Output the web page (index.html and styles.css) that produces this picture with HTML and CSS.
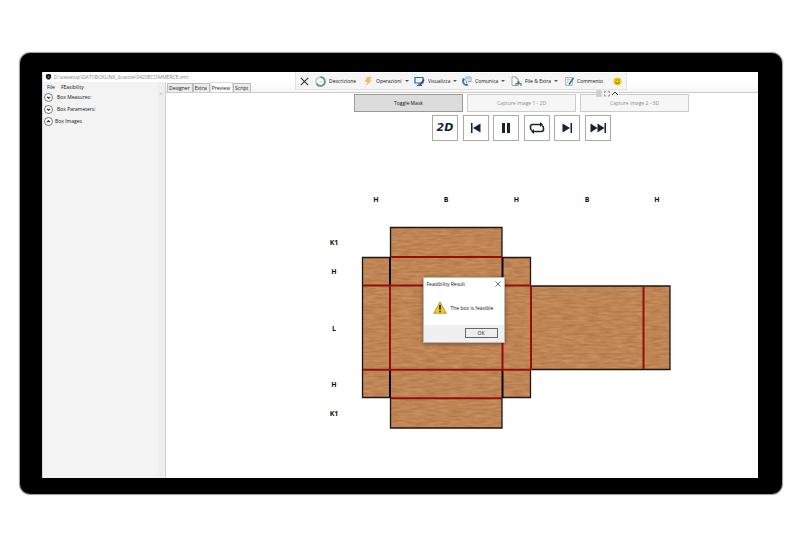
FILE: index.html
```html
<!DOCTYPE html>
<html lang="en">
<head>
<meta charset="utf-8">
<meta name="viewport" content="width=device-width, initial-scale=1">
<title>Box preview</title>
<link rel="stylesheet" href="styles.css">
</head>
<body>
<div class="monitor">
  <div class="screen">
    <header class="titlebar">
      <svg class="app-icon" viewBox="0 0 8 7"><path d="M1 1Q4-1 7 1V4L5 6.500H3L1 4Z" fill="#111"/><path d="M3 3.500h2" stroke="#ddd"/></svg>
      <span>D:\swsetup\DATI\BOXLINK_Scatole\0420ECOMMERCE.xml</span>
    </header>
    <div class="workspace">
      <aside class="sidebar">
        <div class="side-content">
          <nav class="menu"><button>File</button><button>FEasibility</button></nav>
          <button class="expander"><svg viewBox="0 0 9 9"><circle cx="4.500" cy="4.500" r="4"/><path d="M3 3.800l1.500 1.500L6 3.800"/></svg>Box Measures:</button>
          <button class="expander"><svg viewBox="0 0 9 9"><circle cx="4.500" cy="4.500" r="4"/><path d="M3 3.800l1.500 1.500L6 3.800"/></svg>Box Parameters:</button>
          <button class="expander open"><svg viewBox="0 0 9 9"><circle cx="4.500" cy="4.500" r="4"/><path d="M3 5.200l1.500-1.500L6 5.200"/></svg>Box Images</button>
        </div>
        <div class="scrollbar"><svg viewBox="0 0 4 4"><path d="M.5 3L2 1l1.500 2" fill="none" stroke="#aaa" stroke-width=".6"/></svg></div>
      </aside>
      <main class="main">
        <nav class="tabs">
          <button>Designer</button><button>Extra</button><button class="active">Preview</button><button>Script</button>
        </nav>
        <section class="preview">
          <div class="actions">
            <button class="toggle">Toggle Mask</button>
            <button disabled>Capture image 1 - 2D</button>
            <button disabled>Capture image 2 - 3D</button>
          </div>
          <div class="player">
            <button class="two-d">2D</button>
            <button aria-label="First"><svg viewBox="0 0 24 24"><path d="M7 7h1.500v10H7zM16.500 7.500v9l-7.500-4.500z"/></svg></button>
            <button aria-label="Pause"><svg viewBox="0 0 24 24"><path d="M8 7h3v10H8zM13 7h3v10h-3z"/></svg></button>
            <button aria-label="Repeat"><svg viewBox="0 0 24 24"><path d="M15.500 8.500H7.500Q5.500 8.500 5.500 10.500V12Q5.500 14 7 14.200M8.500 15.500h8q2 0 2-2V12Q18.500 10 17 9.800" fill="none" stroke="#142433" stroke-width="1.600"/><path d="M15 6l3 2.500-3 2.500zM9 13l-3 2.500L9 18z"/></svg></button>
            <button aria-label="Last"><svg viewBox="0 0 24 24"><path d="M7.500 7.500v9l7.500-4.500zM15.500 7H17v10h-1.500z"/></svg></button>
            <button aria-label="Fast forward"><svg viewBox="0 0 24 24"><path d="M4.500 7.500v9l7-4.500zM11.500 7.500v9l7-4.500zM18.500 7H20v10h-1.500z"/></svg></button>
          </div>
          <div class="stage">
            <svg class="diagram" viewBox="321 190 402 250">
              <defs>
                <filter id="grain" x="0" y="0" width="100%" height="100%" color-interpolation-filters="sRGB">
                  <feTurbulence type="fractalNoise" baseFrequency=".08 .45" numOctaves="3" seed="4"/>
                  <feColorMatrix values=".14 0 0 0 .68  .15 0 0 0 .445  .15 0 0 0 .255  0 0 0 0 1"/>
                  <feComposite in2="SourceGraphic" operator="in"/>
                </filter>
              </defs>
              <path filter="url(#grain)" fill="#be8454" d="M390.500 227.500H502V257.500H530.500V286H670V369.500H530.500V397.500H502V428H390.500V397.500H362.500V257.500H390.500Z"/>
              <path fill="none" stroke="#1c1712" stroke-width="1.300" d="M390.500 227.500H502V257.500H530.500V286H670V369.500H530.500V397.500H502V428H390.500V397.500H362.500V257.500H390.500Z"/>
              <path stroke="#0c0806" stroke-width="2" d="M390 257.500V286M502.500 257.500V286M390 369.500V398M502.500 369.500V398"/>
              <path stroke="#990c0c" stroke-width="2" d="M391 257H502M363 285.500H531M363 369.800H531M391 398.200H502M390 286V369.500M502.500 286V369.500M531 285.500V370M643.500 286.500V369"/>
              <g class="dims">
                <text x="376" y="202">H</text><text x="446" y="202">B</text><text x="516.500" y="202">H</text><text x="587" y="202">B</text><text x="657" y="202">H</text>
                <text x="334" y="245">K1</text><text x="334" y="274">H</text><text x="334" y="331">L</text><text x="334" y="387">H</text><text x="334" y="416">K1</text>
              </g>
            </svg>
            <div class="dialog" role="dialog" aria-labelledby="dialog-title">
              <div class="dialog-head"><span id="dialog-title">Feasibility Result</span><button aria-label="Close"><svg viewBox="0 0 6 6"><path d="M.5.500l5 5M5.500.500l-5 5" stroke="#333" stroke-width=".7"/></svg></button></div>
              <div class="dialog-body"><svg viewBox="0 0 14 13"><path d="M7 .8L13.300 12.300H.7Z" fill="#f3c91f" stroke="#a98a35" stroke-width=".8" stroke-linejoin="round"/><path d="M7 4v4.500M7 9.700v1.500" stroke="#222" stroke-width="1.700"/></svg><span>The box is feasible</span></div>
              <div class="dialog-foot"><button>OK</button></div>
            </div>
          </div>
        </section>
      </main>
    </div>
    <div class="remote">
      <button aria-label="Close session"><svg viewBox="0 0 9 9"><path d="M.8.800l7.400 7.400M8.200.800L.8 8.200" stroke="#333" stroke-width="1.100"/></svg></button>
      <button><svg class="wide" viewBox="0 0 11 11"><circle cx="5.500" cy="5.500" r="4.400" fill="#fff" stroke="#b4d2c5" stroke-width="1.700"/><path d="M5.500 1.100A4.400 4.400 0 1 1 1.500 7.500" fill="none" stroke="#5a9c87" stroke-width="1.700"/><path d="M4 5.500h3" stroke="#bbb" stroke-width=".7"/></svg>Descrizione</button>
      <button><svg viewBox="0 0 9 9"><path d="M3 0h5L5.500 3.500H8L1.500 9 3.300 5H.8Z" fill="#f2bc63"/></svg>Operazioni<i class="caret"></i></button>
      <button><svg class="wide" viewBox="0 0 11 11"><path d="M1 1.500h8v5.500H1z" fill="#eef5fc" stroke="#2967ad" stroke-width="1.200"/><path d="M3 9.500h5M5 7v2" stroke="#2967ad" stroke-width="1.200"/><path d="M10 3.500L6 9" stroke="#34475e" stroke-width="1.500"/></svg>Visualizza<i class="caret"></i></button>
      <button><svg class="wide" viewBox="0 0 11 11"><path d="M1.500 2.500Q0 7 4 9.500q2 1 3.500-.5L6 7.500 4.500 8Q2.500 6.500 3 4.500L4 4 3 2Z" fill="#3678c2"/><path d="M5 1h5v4.500H7L5.500 7V5.500H5z" fill="#fff" stroke="#788da8" stroke-width=".8"/><path d="M6 2.500h3M6 4h3" stroke="#788da8" stroke-width=".5"/></svg>Comunica<i class="caret"></i></button>
      <button><svg class="wide" viewBox="0 0 11 11"><path d="M1 .8h4l2 2V9.500H1z" fill="#fff" stroke="#8b9299" stroke-width=".8"/><path d="M5 .8v2h2" fill="none" stroke="#8b9299" stroke-width=".7"/><path d="M5 10V7.500h5V10M7.500 9V5" fill="none" stroke="#438f70" stroke-width="1.200"/><path d="M5.700 6.500L7.500 4.500l1.800 2z" fill="#438f70"/></svg>File &amp; Extra<i class="caret"></i></button>
      <button><svg viewBox="0 0 9 9"><path d="M.7.700h6.500v7.600H.7z" fill="#fff" stroke="#8499b0" stroke-width=".8"/><path d="M2 2.500h3M2 4h2M2 5.500h1" stroke="#8499b0" stroke-width=".6"/><path d="M8.500 1L4 7.500" stroke="#2869a8" stroke-width="1.500"/></svg>Commento</button>
      <button aria-label="Feedback"><svg viewBox="0 0 9 9"><circle cx="4.500" cy="4.500" r="4.100" fill="#f5cf18"/><path d="M3.200 2.300v1.400M5.800 2.300v1.400M2.200 5.200Q4.500 8 6.800 5.200" fill="none" stroke="#6d4b0c" stroke-width=".9"/></svg></button>
      <div class="remote-tab"><svg viewBox="0 0 23 7"><path d="M0 0h6v7H0z" fill="#ddd"/><path d="M2 0v7M4 0v7M0 2.500h6M0 5h6" stroke="#bbb" stroke-width=".5"/><path d="M8.500 3V1.500H10M12 1.500h1.500V3M13.500 4.500V6H12M10 6H8.500V4.500" fill="none" stroke="#777" stroke-width=".8"/><path d="M16 5l3-3 3 3" fill="none" stroke="#333" stroke-width="1"/></svg></div>
    </div>
  </div>
</div>
</body>
</html>
```
FILE: styles.css
```css
* { box-sizing: border-box; }
body {
  margin: 0;
  min-height: 100vh;
  display: flex;
  flex-direction: column;
  padding: 53px 18px 39px 20px;
  background: #fff;
  color: #111;
  font: 5px/8px "Open Sans", "Noto Sans", sans-serif;
}
button {
  margin: 0;
  padding: 0;
  border: 0;
  background: none;
  color: inherit;
  font: inherit;
  white-space: nowrap;
}
svg { display: block; flex: none; }
.monitor {
  flex: 1;
  display: flex;
  padding: 19px 24px 16px 22px;
  background: #000;
  border-radius: 10px;
  box-shadow: 0 0 1px 1px #999;
}
.screen {
  position: relative;
  flex: 1;
  min-width: 0;
  display: flex;
  flex-direction: column;
  background: #fff;
  border-left: 1px solid #cfdbe5;
}
.titlebar {
  display: flex;
  align-items: center;
  gap: 2px;
  height: 10px;
  padding-left: 2px;
  color: #888;
}
.app-icon { width: 7px; height: 6px; }
.workspace { flex: 1; display: flex; }
.sidebar {
  flex: none;
  display: flex;
  width: 123px;
  background: #f3f3f3;
  border-right: 1px solid #d0d0d0;
}
.side-content {
  flex: 1;
  display: flex;
  flex-direction: column;
  align-items: flex-start;
  padding-left: 1px;
}
.menu { display: flex; gap: 6px; height: 9px; padding-left: 3px; align-items: center; }
.expander { display: flex; align-items: center; gap: 4px; height: 12px; }
.expander.open { gap: 2px; }
.expander svg { width: 9px; height: 9px; fill: #fff; stroke: #444; stroke-width: .7; }
.expander path { fill: none; stroke: #222; stroke-width: 1.1; }
.scrollbar { width: 7px; padding: 10px 1px; background: #eee; }
.scrollbar svg { width: 4px; height: 4px; }
.main { flex: 1; min-width: 0; display: flex; flex-direction: column; }
.tabs {
  display: flex;
  align-items: flex-end;
  height: 11px;
  padding-left: 1px;
  background: linear-gradient(#fff, #f6f6f6);
  border-bottom: 1px solid #ccc;
}
.tabs button {
  height: 9px;
  padding: 0 2px 0 1px;
  background: #ececec;
  border: 1px solid #bbb;
  border-bottom: 0;
}
.tabs .active { height: 10px; background: #fff; border-color: #ddd; }
.preview {
  flex: 1;
  display: flex;
  flex-direction: column;
  align-items: center;
  padding: 1px 0 0 119px;
}
.actions { display: flex; gap: 4px; }
.actions button {
  width: 109px;
  height: 18px;
  background: #f6f6f6;
  border: 1px solid #ccc;
  color: #8c8c8c;
}
.actions .toggle { background: #dcdcdc; border-color: #999; color: #111; }
.player {
  display: flex;
  justify-content: space-between;
  width: 179px;
  margin-top: 3px;
}
.player button {
  display: grid;
  place-items: center;
  width: 26px;
  height: 26px;
  border: 1px solid #aaa;
  background: #fff;
  color: #142433;
}
.player svg { width: 24px; height: 24px; fill: #142433; }
.player .two-d { font: italic bold 11px/24px "DejaVu Sans", sans-serif; }
.stage { position: relative; width: 402px; margin-top: 49px; }
.diagram { width: 100%; height: auto; }
.dims { font-size: 7px; font-weight: bold; text-anchor: middle; fill: #111; }
.dialog {
  position: absolute;
  left: 102px;
  top: 87px;
  width: 82px;
  background: #fff;
  border: 1px solid #bba;
  box-shadow: 0 1px 4px rgba(0, 0, 0, .4);
}
.dialog-head {
  display: flex;
  justify-content: space-between;
  align-items: center;
  height: 12px;
  padding: 0 3px;
}
.dialog-head svg { width: 6px; height: 6px; }
.dialog-body { display: flex; align-items: center; gap: 4px; height: 35px; padding-left: 9px; }
.dialog-body svg { width: 14px; height: 13px; }
.dialog-foot { display: flex; justify-content: flex-end; padding: 3px 6px 4px; background: #f0f0f0; }
.dialog-foot button { width: 33px; height: 10px; border: 1px solid #666; background: #eee; }
.remote {
  position: absolute;
  left: 252px;
  top: 1px;
  display: grid;
  grid-template-columns: 15px 49px 50px 47px 50px 54px 48px 13px;
  height: 17px;
  padding-left: 4px;
  background: #f5f5f5;
  border: 1px solid #e2e2e2;
  border-top: 0;
}
.remote button { display: flex; align-items: center; gap: 3px; }
.remote svg { width: 9px; height: 9px; }
.remote .wide { width: 11px; height: 11px; }
.remote .caret {
  border: 2px solid transparent;
  border-top-color: #555;
  border-bottom: 0;
}
.remote-tab {
  position: absolute;
  right: 7px;
  top: 17px;
  background: #f3f3f3;
}
.remote .remote-tab svg { width: 23px; height: 7px; }
```
